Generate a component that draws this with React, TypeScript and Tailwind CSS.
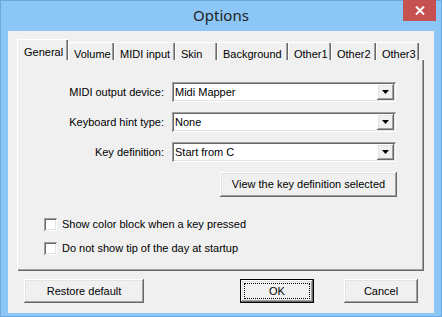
import React from 'react';

const raised =
  'shadow-[inset_-1px_-1px_0_#696969,inset_1px_1px_0_#ffffff,inset_-2px_-2px_0_#a0a0a0,inset_2px_2px_0_#e3e3e3]';
const sunken =
  'shadow-[inset_1px_1px_0_#a0a0a0,inset_-1px_-1px_0_#ffffff,inset_2px_2px_0_#696969,inset_-2px_-2px_0_#e3e3e3]';

const tabs = [
  { label: 'General', w: 'w-[51px]' },
  { label: 'Volume', w: 'w-[46px]' },
  { label: 'MIDI input', w: 'w-[61px]' },
  { label: 'Skin', w: 'w-[42px]' },
  { label: 'Background', w: 'w-[71px]' },
  { label: 'Other1', w: 'w-[43px]' },
  { label: 'Other2', w: 'w-[45px]' },
  { label: 'Other3', w: 'w-[43px]' },
];

const Combo: React.FC<{ value: string }> = ({ value }) => (
  <div className={`flex items-center w-[224px] h-[20px] bg-white ${sunken} p-[2px]`}>
    <span className="flex-1 pl-[1px] leading-none">{value}</span>
    <div className={`w-[17px] h-[16px] bg-[#f0f0f0] ${raised} flex items-center justify-center`}>
      <svg width="7" height="4" viewBox="0 0 7 4">
        <path d="M0 0h7L3.5 4z" fill="#000" />
      </svg>
    </div>
  </div>
);

const Check: React.FC<{ label: string }> = ({ label }) => (
  <div className="flex items-center gap-[5px] h-[13px]">
    <div className={`w-[13px] h-[13px] bg-white ${sunken}`} />
    <span>{label}</span>
  </div>
);

export default function App() {
  return (
    <div className="w-[442px] h-[317px] bg-[#8cc6f6] border border-[#6aa9e0] flex flex-col font-['Liberation_Sans',Arial,sans-serif] text-[11px] text-black">
      {/* title bar */}
      <div className="relative h-[30px] flex items-center justify-center">
        <span className="font-['Noto_Sans',sans-serif] text-[15px] text-[#222] mt-[-1px]">Options</span>
        <div className="absolute top-[-1px] right-[5px] w-[33px] h-[21px] bg-[#c75050] flex items-center justify-center">
          <svg width="10" height="9" viewBox="0 0 10 9">
            <path d="M1 0.5l8 8M9 0.5l-8 8" stroke="#fff" strokeWidth="2" />
          </svg>
        </div>
      </div>

      {/* client */}
      <div className="mx-[7px] h-[282px] bg-[#f0f0f0] flex flex-col pl-[9px] pt-[8px]">
        {/* tabs */}
        <div className="flex items-end h-[21px] relative z-10">
          {tabs.map((t, i) =>
            i === 0 ? (
              <div
                key={t.label}
                className={`${t.w} h-[21px] bg-[#f0f0f0] border-t border-l border-white shadow-[inset_-1px_0_0_#696969,inset_-2px_0_0_#a0a0a0] flex items-start pt-[4px] pl-[6px]`}
              >
                {t.label}
              </div>
            ) : (
              <div
                key={t.label}
                className={`${t.w} h-[18px] bg-[#f0f0f0] border-t border-l border-white shadow-[inset_-1px_0_0_#696969,inset_-2px_0_0_#a0a0a0] flex items-start pt-[3px] pl-[5px]`}
              >
                {t.label}
              </div>
            )
          )}
        </div>

        {/* panel */}
        <div className="relative w-[407px] h-[212px] mt-[-1px] border-t border-l border-white shadow-[inset_-1px_-1px_0_#696969,inset_-2px_-2px_0_#a0a0a0] flex flex-col pt-[22px]">
          <div className="flex flex-col gap-[10px]">
            {[
              ['MIDI output device:', 'Midi Mapper'],
              ['Keyboard hint type:', 'None'],
              ['Key definition:', 'Start from C'],
            ].map(([l, v]) => (
              <div key={l} className="flex items-center">
                <span className="w-[147px] text-right pr-[1px] mr-[7px]">{l}</span>
                <Combo value={v} />
              </div>
            ))}
          </div>
          <div className="flex justify-end pr-[27px] mt-[10px]">
            <div className={`w-[177px] h-[25px] ${raised} flex items-center justify-center`}>
              View the key definition selected
            </div>
          </div>
          <div className="flex flex-col gap-[11px] pl-[26px] mt-[21px]">
            <Check label="Show color block when a key pressed" />
            <Check label="Do not show tip of the day at startup" />
          </div>
        </div>

        {/* bottom buttons */}
        <div className="flex mt-[8px] pl-[7px] h-[24px]">
          <div className={`w-[120px] h-[24px] ${raised} flex items-center justify-center`}>Restore default</div>
          <div className="w-[96px]" />
          <div className="w-[74px] h-[24px] border border-black p-0 flex">
            <div className={`flex-1 ${raised} flex items-center justify-center p-[3px]`}>
              <div className="w-full h-full border border-dotted border-black flex items-center justify-center">OK</div>
            </div>
          </div>
          <div className="w-[30px]" />
          <div className={`w-[74px] h-[24px] ${raised} flex items-center justify-center`}>Cancel</div>
        </div>
      </div>
    </div>
  );
}
